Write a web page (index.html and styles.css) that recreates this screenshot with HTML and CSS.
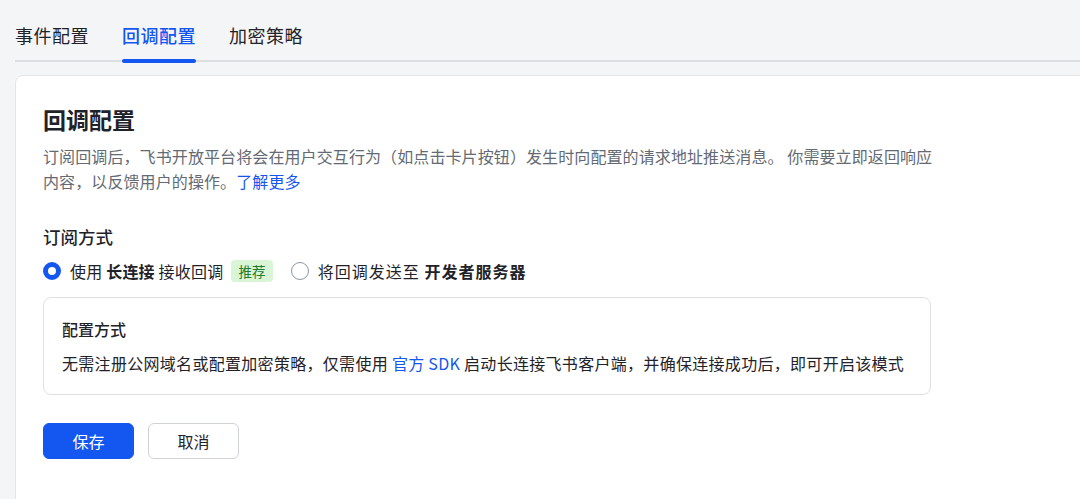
FILE: index.html
```html
<!DOCTYPE html>
<html lang="zh-CN">
<head>
<meta charset="utf-8">
<title>回调配置</title>
<link rel="stylesheet" href="styles.css">
</head>
<body>
<nav class="tabs">
  <div class="tab">事件配置</div>
  <div class="tab active">回调配置</div>
  <div class="tab">加密策略</div>
</nav>
<main class="card">
  <h1 class="title">回调配置</h1>
  <p class="desc">订阅回调后，飞书开放平台将会在用户交互行为（如点击卡片按钮）发生时向配置的请求地址推送消息。 你需要立即返回响应<br>内容，以反馈用户的操作。<a class="link" href="#">了解更多</a></p>
  <h2 class="subtitle">订阅方式</h2>
  <div class="radios">
    <label class="radio-item">
      <span class="radio checked"></span>
      <span class="radio-text">使用 <b>长连接</b> 接收回调</span>
      <span class="tag">推荐</span>
    </label>
    <label class="radio-item wide">
      <span class="radio"></span>
      <span class="radio-text">将回调发送至 <b>开发者服务器</b></span>
    </label>
  </div>
  <section class="info">
    <div class="info-title">配置方式</div>
    <div class="info-text">无需注册公网域名或配置加密策略，仅需使用 <a class="link" href="#">官方 SDK</a> 启动长连接飞书客户端，并确保连接成功后，即可开启该模式</div>
  </section>
  <div class="actions">
    <button class="btn primary">保存</button>
    <button class="btn">取消</button>
  </div>
</main>
</body>
</html>
```
FILE: styles.css
```css
* { box-sizing: border-box; }
html, body {
  margin: 0;
  padding: 0;
  background: #f4f5f7;
  font-family: "Noto Sans CJK SC", "Noto Sans", "Liberation Sans", sans-serif;
  color: #1f2329;
  overflow: hidden;
}
.tabs {
  display: flex;
  gap: 33px;
  margin-left: 15px;
  height: 62px;
  border-bottom: 2px solid #dcdee1;
}
.tab {
  position: relative;
  font-size: 18px;
  line-height: 24px;
  padding-top: 23px;
  color: #1f2329;
  letter-spacing: 0.5px;
}
.tab.active {
  color: #1456f0;
  font-weight: 500;
}
.tab.active::after {
  content: "";
  position: absolute;
  left: 0;
  right: 0;
  bottom: -3px;
  height: 4px;
  border-radius: 2px;
  background: #1456f0;
}
.card {
  margin: 13px -30px 0 15px;
  background: #fff;
  border: 1px solid #e4e6e9;
  border-radius: 8px;
  padding: 28px 0 30px 27px;
  min-height: 440px;
}
.title {
  margin: 0;
  font-size: 23px;
  line-height: 30px;
  font-weight: 600;
}
.desc {
  margin: 10px 0 0;
  max-width: 910px;
  font-size: 16px;
  line-height: 25px;
  color: #646a73;
  letter-spacing: 0.1px;
}
.link {
  color: #1456f0;
  text-decoration: none;
}
.subtitle {
  margin: 30px 0 0;
  font-size: 17.5px;
  line-height: 26px;
  font-weight: 500;
}
.radios {
  display: flex;
  align-items: center;
  gap: 18px;
  margin-top: 9px;
  height: 24px;
}
.radio-item {
  display: flex;
  align-items: center;
  font-size: 16px;
  line-height: 24px;
  letter-spacing: 0.2px;
}
.radio-item.wide {
  letter-spacing: 1px;
}
.radio {
  width: 18px;
  height: 18px;
  border-radius: 50%;
  border: 1px solid #8f959e;
  margin-right: 9px;
  background: #fff;
}
.radio.checked {
  border: 5.5px solid #1456f0;
}
.radio-text b {
  font-weight: 600;
}
.tag {
  margin-left: 8px;
  padding: 0 7px;
  height: 22px;
  line-height: 22px;
  border-radius: 4px;
  background: #d9f5d6;
  color: #237b2d;
  font-size: 13.5px;
}
.info {
  margin-top: 14px;
  width: 888px;
  border: 1px solid #dee0e3;
  border-radius: 8px;
  padding: 19px 18px 19px 18px;
}
.info-title {
  font-size: 16px;
  line-height: 24px;
  font-weight: 500;
}
.info-text {
  margin-top: 10px;
  font-size: 16px;
  line-height: 24px;
  letter-spacing: 0.3px;
  white-space: nowrap;
  color: #1f2329;
}
.actions {
  display: flex;
  gap: 14px;
  margin-top: 28px;
}
.btn {
  width: 91px;
  height: 36px;
  border-radius: 6px;
  border: 1px solid #d0d3d6;
  background: #fff;
  color: #1f2329;
  font-family: inherit;
  font-size: 16px;
  padding: 0;
}
.btn.primary {
  background: #1456f0;
  border-color: #1456f0;
  color: #fff;
}
```
